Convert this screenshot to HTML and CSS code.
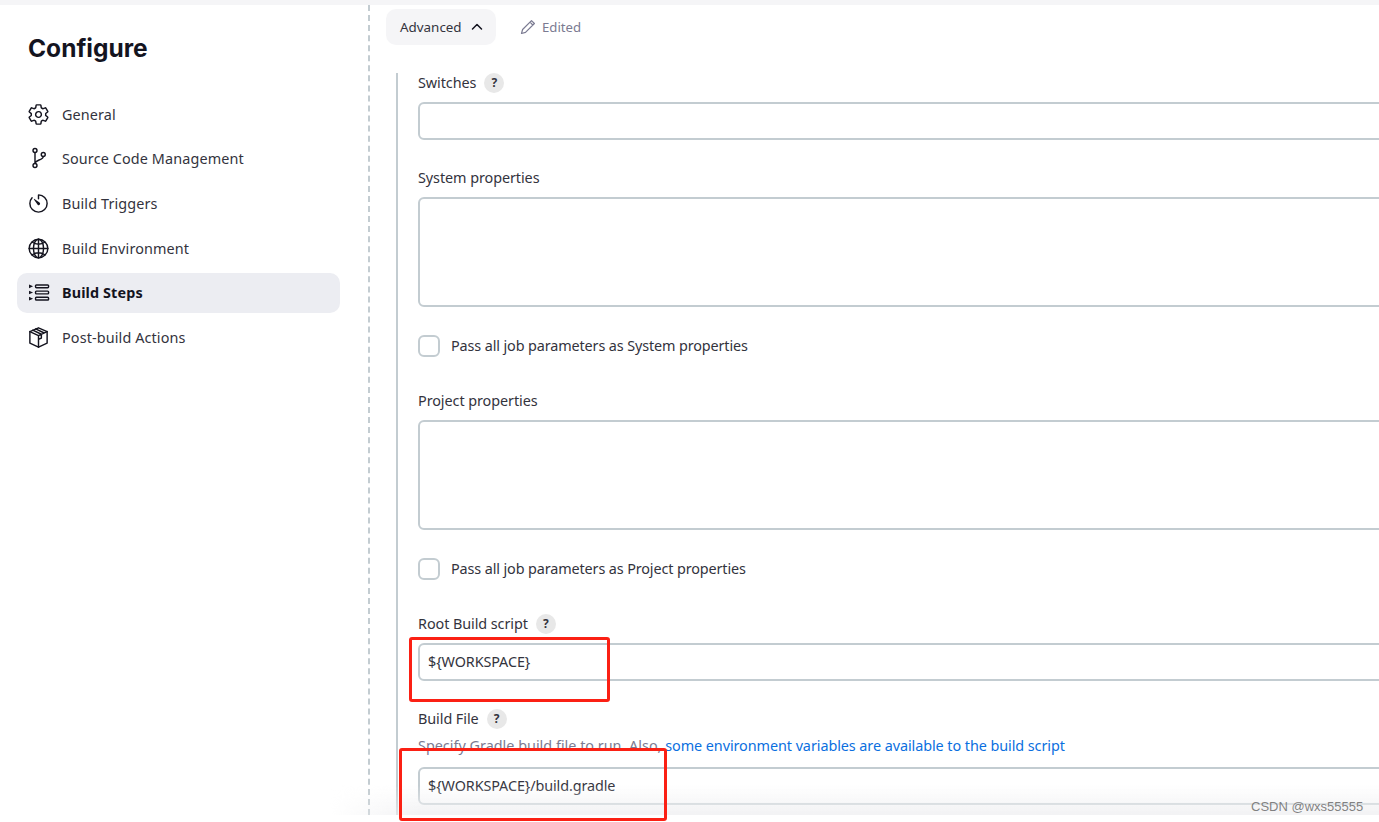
FILE: index.html
```html
<!DOCTYPE html>
<html lang="en">
<head>
<meta charset="utf-8">
<title>Configure</title>
<link rel="stylesheet" href="styles.css">
</head>
<body>
<div class="topstrip"></div>
<div class="page">
  <aside class="sidebar">
    <h1 class="title">Configure</h1>
    <nav class="nav">
      <a class="nav-item"><svg class="nav-icon" viewBox="0 0 512 512"><path class="st" d="M262.29 192.31a64 64 0 1057.4 57.4 64.13 64.13 0 00-57.4-57.4zM416.39 256a154.34 154.34 0 01-1.53 20.79l45.21 35.46a10.81 10.81 0 012.45 13.75l-42.77 74a10.81 10.81 0 01-13.14 4.59l-44.9-18.08a16.11 16.11 0 00-15.17 1.75A164.48 164.48 0 01325 400.8a15.94 15.94 0 00-8.82 12.14l-6.73 47.89a11.08 11.08 0 01-10.68 9.17h-85.54a11.11 11.11 0 01-10.69-8.87l-6.72-47.82a16.07 16.07 0 00-9-12.22 155.3 155.3 0 01-21.46-12.57 16 16 0 00-15.11-1.71l-44.89 18.07a10.81 10.81 0 01-13.14-4.58l-42.77-74a10.8 10.8 0 012.45-13.75l38.21-30a16.05 16.05 0 006-14.08c-.36-4.17-.58-8.33-.58-12.5s.21-8.27.58-12.35a16 16 0 00-6.07-13.94l-38.19-30A10.81 10.81 0 0149.48 186l42.77-74a10.81 10.81 0 0113.14-4.59l44.9 18.08a16.11 16.11 0 0015.17-1.75A164.48 164.48 0 01187 111.2a15.94 15.94 0 008.82-12.14l6.73-47.89A11.08 11.08 0 01213.23 42h85.54a11.11 11.11 0 0110.69 8.87l6.72 47.82a16.07 16.07 0 009 12.22 155.3 155.3 0 0121.46 12.57 16 16 0 0015.11 1.71l44.89-18.07a10.81 10.81 0 0113.14 4.58l42.77 74a10.8 10.8 0 01-2.45 13.75l-38.21 30a16.05 16.05 0 00-6.05 14.08c.33 4.14.55 8.3.55 12.47z"/></svg><span>General</span></a>
      <a class="nav-item"><svg class="nav-icon" viewBox="0 0 512 512"><circle class="st" cx="178" cy="78" r="44"/><circle class="st" cx="178" cy="412" r="44"/><circle class="st" cx="362" cy="165" r="44"/><path class="st" d="M178 122v246M362 209c0 90-184 70-184 159"/></svg><span>Source Code Management</span></a>
      <a class="nav-item"><svg class="nav-icon" viewBox="0 0 512 512"><path class="st" d="M112.91 128A191.85 191.85 0 0064 254c-1.18 106.35 85.65 193.8 192 194 106.2.2 192-85.83 192-192 0-104.54-83.55-189.61-187.5-192a4.36 4.36 0 00-4.5 4.37V152"/><path class="fl" d="M233.38 278.63l-79-113a8.13 8.13 0 0111.32-11.32l113 79a32.5 32.5 0 01-37 53.34 33.21 33.21 0 01-8.32-8.02z"/></svg><span>Build Triggers</span></a>
      <a class="nav-item"><svg class="nav-icon" viewBox="0 0 512 512"><circle class="st" cx="256" cy="256" r="208"/><ellipse class="st" cx="256" cy="256" rx="112" ry="208"/><path class="st" d="M117.33 117.33c38.24 27.15 86.38 43.34 138.67 43.34s100.43-16.19 138.67-43.34M394.67 394.67c-38.24-27.15-86.38-43.34-138.67-43.34s-100.43 16.19-138.67 43.34M256 48v416M464 256H48"/></svg><span>Build Environment</span></a>
      <a class="nav-item active"><svg class="nav-icon" viewBox="0 0 512 512"><rect class="st" x="190" y="88" width="290" height="62" rx="20"/><rect class="st" x="190" y="225" width="290" height="62" rx="20"/><rect class="st" x="190" y="362" width="290" height="62" rx="20"/><path class="fl" d="M45 79l90 40-90 40zM45 216l90 40-90 40zM45 353l90 40-90 40z"/></svg><span>Build Steps</span></a>
      <a class="nav-item"><svg class="nav-icon" viewBox="0 0 512 512"><path class="st" d="M256 40l192 84v256L256 472 64 380V124z"/><path class="st" d="M64 124l192 92 192-92M256 216v256M128 92l192 92v84l-64 30v-82M192 64l192 92"/></svg><span>Post-build Actions</span></a>
    </nav>
  </aside>
  <main class="content">
    <div class="toolbar">
      <button class="adv-btn" type="button">Advanced<svg class="chev" viewBox="0 0 12 12"><path d="M1.5 8l4.5-4.500 4.500 4.500"/></svg></button>
      <span class="edited"><svg class="pencil" viewBox="0 0 16 16"><path d="M11.5 1.600l2.900 2.900-8.900 8.900-4 1.100 1.100-4zM10 3.200l2.800 2.800"/></svg>Edited</span>
    </div>
    <div class="fields">
      <div class="field f-switches">
        <div class="label">Switches <span class="help">?</span></div>
        <div class="input"></div>
      </div>
      <div class="field f-sys">
        <div class="label">System properties</div>
        <div class="input area"></div>
      </div>
      <label class="check"><span class="box"></span>Pass all job parameters as System properties</label>
      <div class="field f-proj">
        <div class="label">Project properties</div>
        <div class="input area"></div>
      </div>
      <label class="check"><span class="box"></span>Pass all job parameters as Project properties</label>
      <div class="field f-root">
        <div class="label">Root Build script <span class="help">?</span></div>
        <div class="input">${WORKSPACE}</div>
      </div>
      <div class="field f-file">
        <div class="label">Build File <span class="help">?</span></div>
        <div class="hint">Specify Gradle build file to run. Also, <a class="link">some environment variables are available to the build script</a></div>
        <div class="input">${WORKSPACE}/build.gradle</div>
      </div>
    </div>
  </main>
</div>
<div class="fade"></div>
<div class="mark mark-a"></div>
<div class="mark mark-b"></div>
<div class="watermark">CSDN @wxs55555</div>
</body>
</html>
```
FILE: styles.css
```css
* { box-sizing: border-box; }
html, body { margin: 0; height: 822px; overflow: hidden; background: #fff; }
body { font-family: "Noto Sans", "Liberation Sans", sans-serif; font-size: 14px; color: #33333d; position: relative; }
.topstrip { height: 5px; background: #f5f5f7; }
.page { display: flex; height: 810px; overflow: hidden; }
.sidebar { width: 370px; flex: none; padding: 23px 28px 0 17px; border-right: 2px dashed #c3ccd1; }
.title { margin: 0 0 0 11px; font-family: Inter, "Noto Sans", sans-serif; font-size: 24.5px; line-height: 40px; font-weight: 700; color: #14141f; }
.nav { margin-top: 26px; display: flex; flex-direction: column; gap: 4.7px; }
.nav-item { display: flex; align-items: center; gap: 12px; height: 40px; padding-left: 10px; border-radius: 10px; font-size: 14.4px; letter-spacing: .12px; color: #33333d; }
.nav-item.active { background: #ecedf2; font-weight: 700; color: #14141f; }
.nav-icon { width: 23px; height: 23px; flex: none; }
.st { fill: none; stroke: #14141f; stroke-width: 32; stroke-linecap: round; stroke-linejoin: round; }
.fl { fill: #14141f; }
.content { flex: 1; min-width: 0; padding: 4px 0 0 16px; overflow: hidden; }
.toolbar { display: flex; align-items: center; gap: 24px; height: 36px; }
.adv-btn { display: flex; align-items: center; gap: 9px; height: 36px; width: 110px; padding: 0 0 0 14px; border: 0; border-radius: 10px; background: #f5f5f7; font: inherit; font-size: 13.4px; color: #33333d; }
.chev { width: 12px; height: 12px; fill: none; stroke: #14141f; stroke-width: 1.5; stroke-linecap: round; stroke-linejoin: round; }
.edited { display: flex; align-items: center; gap: 6px; font-size: 13.2px; color: #7b7b92; }
.pencil { width: 16px; height: 16px; fill: none; stroke: #7b7b92; stroke-width: 1.2; stroke-linejoin: round; }
.fields { margin: 28px 0 0 10px; padding: 0 0 0 20px; border-left: 2px solid #c3ccd1; height: 760px; }
.field { display: block; }
.label { display: flex; align-items: center; gap: 8px; height: 20px; font-size: 14.4px; line-height: 20px; letter-spacing: -.07px; }
.help { display: inline-flex; align-items: center; justify-content: center; width: 20px; height: 20px; border-radius: 50%; background: #e8e8e8; font-size: 12px; font-weight: 700; letter-spacing: 0; color: #33333d; }
.input { height: 38px; margin-top: 9px; margin-right: -20px; padding: 0 8px 2px; border: 2px solid #c3ccd1; border-radius: 6px; background: #fff; display: flex; align-items: center; font-size: 14.4px; letter-spacing: -.1px; color: #33333d; }
.area { height: 110px; }
.f-sys { margin-top: 28px; }
.f-proj { margin-top: 34px; }
.f-root { margin-top: 34px; }
.f-file { margin-top: 28px; }
.check { display: flex; align-items: center; gap: 11px; height: 22px; margin-top: 28px; padding-bottom: 1px; font-size: 14.4px; letter-spacing: -.12px; }
.box { width: 22px; height: 22px; flex: none; margin-bottom: -1px; border: 2px solid #c3ccd1; border-radius: 6px; background: #fff; }
.hint { height: 20px; margin-top: 7px; font-size: 14.4px; line-height: 20px; color: #7b7b92; }
.link { color: #0b6fe0; letter-spacing: -.07px; }
.f-file .input { margin-top: 11px; }
.fade { position: absolute; left: 330px; right: 0; top: 785px; height: 30px; background: linear-gradient(to bottom, rgba(240,240,242,0), rgba(240,240,242,.85)); -webkit-mask-image: linear-gradient(to right, transparent, #000 90px); mask-image: linear-gradient(to right, transparent, #000 90px); pointer-events: none; }
.mark { position: absolute; border: 3px solid #fb2014; border-radius: 3px; pointer-events: none; }
.mark-a { left: 409px; top: 637px; width: 201px; height: 65px; }
.mark-b { left: 399px; top: 748px; width: 268px; height: 73px; }
.watermark { position: absolute; left: 1251px; top: 798px; font-family: "Liberation Sans", sans-serif; font-size: 13px; line-height: 18px; color: rgba(90,90,90,.75); }
```
